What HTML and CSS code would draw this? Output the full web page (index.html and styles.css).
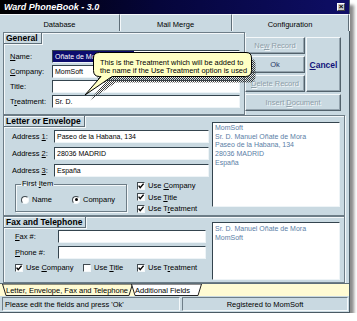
FILE: index.html
```html
<!DOCTYPE html>
<html>
<head>
<meta charset="utf-8">
<title>Ward PhoneBook</title>
<link rel="stylesheet" href="styles.css">
</head>
<body>
<div class="win">
  <div class="titlebar">
    <span class="title">Ward PhoneBook - 3.0</span>
    <span class="close">×</span>
  </div>
  <div class="tabs">
    <div class="tab tab-db active">Database</div>
    <div class="tab tab-mm">Mail Merge</div>
    <div class="tab tab-cf">Configuration</div>
  </div>
  <div class="main">
    <div class="top">
      <div class="section general">
        <div class="sec-title">General</div>
        <div class="fields">
          <div class="row"><label class="lbl"><u>N</u>ame:</label><div class="input in-gen"><span class="sel">Oñate de Mora</span></div></div>
          <div class="row"><label class="lbl"><u>C</u>ompany:</label><div class="input in-gen">MomSoft</div></div>
          <div class="row"><label class="lbl">Title:</label><div class="input in-gen"></div></div>
          <div class="row"><label class="lbl">T<u>r</u>eatment:</label><div class="input in-gen">Sr. D.</div></div>
        </div>
      </div>
      <div class="btns">
        <div class="btn dis b-new">Ne<u>w</u>&nbsp;Record</div>
        <div class="btn cancel"><u>C</u>ancel</div>
        <div class="btn ok b-ok">Ok</div>
        <div class="btn dis b-del"><u>D</u>elete&nbsp;Record</div>
        <div class="btn dis b-ins">Insert&nbsp;<u>D</u>ocument</div>
      </div>
    </div>

    <div class="section letter">
      <div class="lcol">
        <div class="sec-title">Letter or Envelope</div>
        <div class="addr">
          <div class="row"><label class="lbl lbl-addr">Address <u>1</u>:</label><div class="input in-addr">Paseo de la Habana, 134</div></div>
          <div class="row"><label class="lbl lbl-addr">Address <u>2</u>:</label><div class="input in-addr">28036 MADRID</div></div>
          <div class="row"><label class="lbl lbl-addr">Address <u>3</u>:</label><div class="input in-addr">España</div></div>
        </div>
        <div class="opts">
          <fieldset class="group">
            <legend>First <u>I</u>tem</legend>
            <div class="radios">
              <div class="opt opt-name"><span class="rd"></span><span>Name</span></div>
              <div class="opt"><span class="rd on"></span><span>Company</span></div>
            </div>
          </fieldset>
          <div class="checks">
            <div class="opt"><span class="cb"><svg width="6" height="6" viewBox="0 0 6 6"><path d="M0.6 2.6 L2.2 4.6 L5.6 0.6" stroke="#000" stroke-width="1.4" fill="none"/></svg></span><span>Use <u>C</u>ompany</span></div>
            <div class="opt"><span class="cb"><svg width="6" height="6" viewBox="0 0 6 6"><path d="M0.6 2.6 L2.2 4.6 L5.6 0.6" stroke="#000" stroke-width="1.4" fill="none"/></svg></span><span>Use <u>T</u>itle</span></div>
            <div class="opt"><span class="cb"><svg width="6" height="6" viewBox="0 0 6 6"><path d="M0.6 2.6 L2.2 4.6 L5.6 0.6" stroke="#000" stroke-width="1.4" fill="none"/></svg></span><span>Use T<u>r</u>eatment</span></div>
          </div>
        </div>
      </div>
      <div class="preview pv-letter">
        <div>MomSoft</div>
        <div>Sr. D. Manuel Oñate de Mora</div>
        <div>Paseo de la Habana, 134</div>
        <div>28036 MADRID</div>
        <div>España</div>
      </div>
    </div>

    <div class="section fax">
      <div class="fcol">
        <div class="sec-title">Fax and Telephone</div>
        <div class="faxrows">
          <div class="row"><label class="lbl lbl-fax"><u>F</u>ax #:</label><div class="input in-fax"></div></div>
          <div class="row"><label class="lbl lbl-fax"><u>P</u>hone #:</label><div class="input in-fax"></div></div>
        </div>
        <div class="fchecks">
          <div class="opt fc1"><span class="cb"><svg width="6" height="6" viewBox="0 0 6 6"><path d="M0.6 2.6 L2.2 4.6 L5.6 0.6" stroke="#000" stroke-width="1.4" fill="none"/></svg></span><span>Use <u>C</u>ompany</span></div>
          <div class="opt fc2"><span class="cb"></span><span>Use <u>T</u>itle</span></div>
          <div class="opt"><span class="cb"><svg width="6" height="6" viewBox="0 0 6 6"><path d="M0.6 2.6 L2.2 4.6 L5.6 0.6" stroke="#000" stroke-width="1.4" fill="none"/></svg></span><span>Use T<u>r</u>eatment</span></div>
        </div>
      </div>
      <div class="preview pv-fax">
        <div>Sr. D. Manuel Oñate de Mora</div>
        <div>MomSoft</div>
      </div>
    </div>
  </div>

  <div class="sheet">
    <div class="stab stab1">
      <svg class="tabshape" viewBox="0 0 131 12" preserveAspectRatio="none"><polygon points="0.5,0 130.5,0 127,11.5 4,11.5" fill="#fffbd3" stroke="#222" stroke-width="1"/></svg>
      <span>Letter, Envelope, Fax and Telephone</span>
    </div>
    <div class="stab stab2">
      <svg class="tabshape" viewBox="0 0 71 12" preserveAspectRatio="none"><polygon points="0.5,0 70.5,0 67,11.5 4,11.5" fill="#ffffff" stroke="#222" stroke-width="1"/></svg>
      <span>Additional Fields</span>
    </div>
  </div>

  <div class="status">
    <div class="panel p-left">Please edit the fields and press 'Ok'</div>
    <div class="panel p-right">Registered to MomSoft</div>
  </div>

  <div class="tooltip">
    <svg class="tip-svg" width="180" height="62" viewBox="0 0 180 62">
      <defs>
        <pattern id="dith" width="2" height="2" patternUnits="userSpaceOnUse">
          <rect width="1" height="1" fill="#3a3a3a"/>
          <rect x="1" y="1" width="1" height="1" fill="#3a3a3a"/>
        </pattern>
      </defs>
      <path transform="translate(4,6)" fill="url(#dith)" d="M19.5 4.5 H166 Q171.5 4.5 171.5 10 V22.5 Q171.5 28.5 165.5 28.5 H32 L5 47 L21 28.5 H19.5 Q13.5 28.5 13.5 22.5 V10 Q13.5 4.5 19.5 4.5 Z"/>
      <path fill="#ffffc4" stroke="#000" stroke-width="1" d="M19.5 4.5 H166 Q171.5 4.5 171.5 10 V22.5 Q171.5 28.5 165.5 28.5 H32 L5 47 L21 28.5 H19.5 Q13.5 28.5 13.5 22.5 V10 Q13.5 4.5 19.5 4.5 Z"/>
    </svg>
    <div class="tip-text">This is the Treatment which will be added to<br>the name if the Use Treatment option is used</div>
  </div>
</div>
</body>
</html>
```
FILE: styles.css
```css
* { box-sizing: border-box; margin: 0; padding: 0; }

body {
  background: #ffffff;
  font-family: "Liberation Sans", Arial, sans-serif;
  font-size: 7.5px;
  color: #000;
}

u { text-decoration: underline; text-underline-offset: 1px; }

.win {
  position: relative;
  width: 350px;
  height: 313px;
  background: #c9d9e1;
  display: flex;
  flex-direction: column;
  border-right: 1px solid #4a5a64;
  border-bottom: 1px solid #4a5a64;
  box-shadow: 4px 5px 3px #8c8c8c;
}

/* title bar */
.titlebar {
  flex: none;
  height: 14px;
  display: flex;
  align-items: center;
  justify-content: space-between;
  padding: 0 4px 0 4px;
  background: linear-gradient(90deg, #000 0%, #05053a 45%, #0e0e66 100%);
}
.title {
  color: #fff;
  font-weight: bold;
  font-style: italic;
  font-size: 9px;
  line-height: 14px;
}
.close {
  width: 8px;
  height: 8px;
  background: #c8c8c8;
  border: 1px solid;
  border-color: #fff #404040 #404040 #fff;
  font-size: 8px;
  line-height: 6px;
  text-align: center;
  font-weight: bold;
  color: #000;
}

/* top tabs */
.tabs {
  flex: none;
  height: 17px;
  display: flex;
}
.tab {
  display: flex;
  align-items: center;
  justify-content: center;
  font-size: 7.5px;
  padding-top: 2px;
  border-right: 1px solid #5e6e78;
  box-shadow: 1px 0 0 #f4f8fa;
  border-top: 1px solid #f4f8fa;
}
.tab-db { width: 120px; }
.tab-mm { width: 112px; }
.tab-cf { flex: 1; }

/* main area */
.main {
  flex: none;
  height: 252px;
  padding: 1px 0 0 3px;
  display: flex;
  flex-direction: column;
}

.section {
  border: 1px solid #6d7d87;
  box-shadow: inset 1px 1px 0 #f4f8fa, 1px 1px 0 #f4f8fa;
}
.sec-title {
  align-self: flex-start;
  height: 11px;
  line-height: 10px;
  padding: 0 3px 0 2px;
  font-weight: bold;
  font-size: 8.5px;
  border-right: 1px solid #5e6e78;
  border-bottom: 1px solid #5e6e78;
  box-shadow: 1px 1px 0 #f4f8fa;
  white-space: nowrap;
}

.top {
  flex: none;
  height: 83px;
  display: flex;
}
.general {
  width: 242px;
  height: 83px;
  display: flex;
  flex-direction: column;
}
.fields {
  display: flex;
  flex-direction: column;
  gap: 2px;
  padding: 6px 0 0 6px;
}
.row {
  display: flex;
  align-items: center;
  height: 13px;
}
.lbl { width: 42px; flex: none; white-space: nowrap; }
.lbl-fax { width: 43px; }

.input {
  flex: none;
  height: 13px;
  background: #fff;
  border-top: 1px solid #34444e;
  border-left: 1px solid #34444e;
  border-right: 1px solid #eef4f7;
  border-bottom: 1px solid #eef4f7;
  font-size: 7px;
  line-height: 11px;
  padding-left: 2px;
  white-space: nowrap;
  overflow: hidden;
}
.in-gen { width: 188px; }
.in-addr { width: 155px; }
.in-fax { width: 148px; }

.sel {
  display: inline-block;
  margin-left: -2px;
  padding: 0 32px 0 2px;
  background: #0c0c6e;
  color: #fff;
  height: 11px;
}

/* buttons */
.btns {
  display: grid;
  grid-template-columns: 60px 35px;
  grid-template-rows: 17px 17px 17px 17px;
  gap: 2px 1px;
  padding-top: 5px;
  align-content: start;
}
.btn {
  display: flex;
  align-items: center;
  justify-content: center;
  font-size: 7.5px;
  border: 1px solid;
  border-color: #f4f8fa #52626c #52626c #f4f8fa;
  box-shadow: inset -1px -1px 0 #93a3ad;
  white-space: nowrap;
}
.dis {
  color: #8e9ea8;
  text-shadow: 1px 1px 0 #f4f8fa;
}
.b-new { grid-column: 1; grid-row: 1; }
.cancel {
  grid-column: 2;
  grid-row: 1 / 4;
  font-weight: bold;
  font-size: 8.5px;
  color: #12127a;
}
.b-ok { grid-column: 1; grid-row: 2; color: #2a3866; }
.b-del { grid-column: 1; grid-row: 3; }
.b-ins { grid-column: 1 / 3; grid-row: 4; }

/* letter section */
.letter {
  flex: none;
  width: 342px;
  height: 101px;
  display: flex;
}
.lcol {
  width: 205px;
  display: flex;
  flex-direction: column;
}
.addr {
  display: flex;
  flex-direction: column;
  gap: 4px;
  margin-top: 3px;
  padding-left: 8px;
}
.opts {
  display: flex;
  margin-top: 3px;
}
.group {
  margin-left: 11px;
  width: 112px;
  height: 32px;
  border: 1px solid #6d7d87;
  box-shadow: inset 1px 1px 0 #f4f8fa, 1px 1px 0 #f4f8fa;
  padding: 0 0 0 5px;
}
.group legend {
  margin-left: 0px;
  padding: 0 1px;
  font-size: 7.5px;
  line-height: 8px;
}
.radios {
  display: flex;
  margin-top: 6px;
}
.opt {
  display: flex;
  align-items: center;
  gap: 3px;
  white-space: nowrap;
  height: 11px;
}
.opt-name { width: 51px; }
.rd {
  width: 8px;
  height: 8px;
  flex: none;
  border-radius: 50%;
  background: #fff;
  border: 1px solid;
  border-color: #404a50 #f4f8fa #f4f8fa #404a50;
  display: flex;
  align-items: center;
  justify-content: center;
}
.rd.on::after {
  content: "";
  width: 3px;
  height: 3px;
  border-radius: 50%;
  background: #000;
}
.cb {
  width: 8px;
  height: 8px;
  flex: none;
  background: #fff;
  border: 1px solid;
  border-color: #404a50 #f4f8fa #f4f8fa #404a50;
  display: flex;
  align-items: center;
  justify-content: center;
}
.cb svg { display: block; }
.checks {
  margin-left: 10px;
  display: flex;
  flex-direction: column;
  gap: 0.5px;
}

.preview {
  flex: none;
  width: 128px;
  margin-left: 3px;
  background: #fff;
  border-top: 1px solid #34444e;
  border-left: 1px solid #34444e;
  border-right: 1px solid #eef4f7;
  border-bottom: 1px solid #eef4f7;
  color: #5a7ea6;
  font-size: 7px;
  line-height: 8.7px;
  padding: 1px 0 0 2px;
  white-space: nowrap;
}
.pv-letter { height: 85px; margin-top: 6px; }
.pv-fax { height: 58px; margin-top: 5px; padding-top: 2px; }

/* fax section */
.fax {
  flex: none;
  width: 342px;
  height: 67px;
  display: flex;
}
.fcol {
  width: 205px;
  display: flex;
  flex-direction: column;
}
.faxrows {
  display: flex;
  flex-direction: column;
  gap: 3px;
  margin-top: 2px;
  padding-left: 11px;
}
.fchecks {
  display: flex;
  margin-top: 3px;
  padding-left: 11px;
}
.fc1 { width: 68px; }
.fc2 { width: 54px; }

/* sheet tabs */
.sheet {
  flex: none;
  height: 13px;
  background: #fffbd3;
  border-top: 1px solid #5e6e78;
  display: flex;
  padding-left: 2px;
}
.stab {
  position: relative;
  height: 12px;
  display: flex;
  align-items: center;
  padding-left: 4px;
  white-space: nowrap;
}
.stab1 { width: 131px; }
.stab2 { width: 71px; margin-left: -2px; }
.tabshape {
  position: absolute;
  left: 0;
  top: 0;
  width: 100%;
  height: 100%;
}
.stab span { position: relative; }

/* status bar */
.status {
  flex: none;
  height: 16px;
  display: flex;
  gap: 2px;
  padding: 1px 1px 1px 2px;
}
.panel {
  border: 1px solid;
  border-color: #6e7e88 #f4f8fa #f4f8fa #6e7e88;
  display: flex;
  align-items: center;
  white-space: nowrap;
}
.p-left { width: 178px; padding-left: 2px; }
.p-right { flex: 1; justify-content: center; }

/* tooltip balloon overlay */
.tooltip {
  position: absolute;
  left: 80px;
  top: 48px;
  width: 180px;
  height: 62px;
}
.tip-svg { position: absolute; left: 0; top: 0; }
.tip-text {
  position: absolute;
  left: 20px;
  top: 10.5px;
  font-size: 7.4px;
  line-height: 8px;
  white-space: nowrap;
}
```
